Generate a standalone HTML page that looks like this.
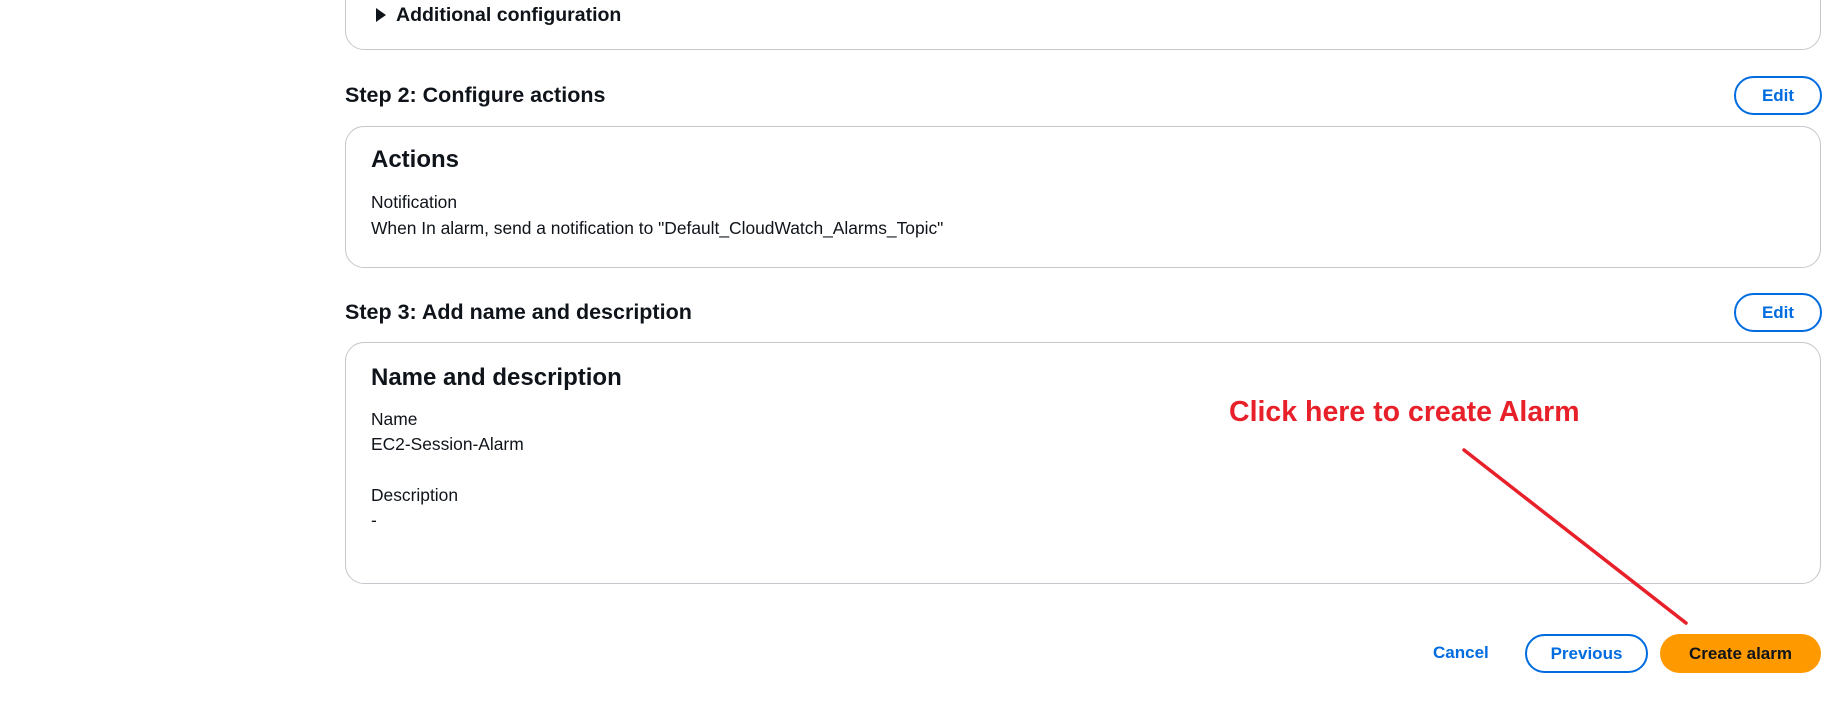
<!DOCTYPE html>
<html><head><style>
body{margin:0;width:1842px;height:706px;background:#fff;font-family:"Liberation Sans",sans-serif;color:#0f141a;position:relative;overflow:hidden}
.card{position:absolute;left:345px;width:1474px;border:1.5px solid #c6c6cd;border-radius:19px;background:#fff}
.h{position:absolute;left:345px;font-weight:bold;font-size:21.5px}
.t{position:absolute;font-size:17.4px}
.ct{position:absolute;font-size:24px;font-weight:bold}
.edit{position:absolute;left:1734px;width:84px;height:35px;border:2px solid #006ce0;border-radius:20px;color:#006ce0;font-weight:bold;font-size:17px;text-align:center;line-height:35px}
</style></head><body>
<div class="card" style="top:-30px;height:78px"></div>
<svg style="position:absolute;left:375px;top:7px" width="12" height="16"><polygon points="1,1 11,8 1,15" fill="#0f141a"/></svg>
<div style="position:absolute;left:396px;top:4px;font-weight:bold;font-size:19.5px">Additional configuration</div>
<div class="h" style="top:83px">Step 2: Configure actions</div>
<div class="edit" style="top:76px">Edit</div>
<div class="card" style="top:126px;height:140px"></div>
<div class="ct" style="left:371px;top:146px">Actions</div>
<div class="t" style="left:371px;top:192px">Notification</div>
<div class="t" style="left:371px;top:218px">When In alarm, send a notification to "Default_CloudWatch_Alarms_Topic"</div>
<div class="h" style="top:300px">Step 3: Add name and description</div>
<div class="edit" style="top:293px">Edit</div>
<div class="card" style="top:342px;height:240px"></div>
<div class="ct" style="left:371px;top:364px">Name and description</div>
<div class="t" style="left:371px;top:409px">Name</div>
<div class="t" style="left:371px;top:434px">EC2-Session-Alarm</div>
<div class="t" style="left:371px;top:485px">Description</div>
<div class="t" style="left:371px;top:510px">-</div>
<div style="position:absolute;left:1229px;top:396px;color:#e8202a;font-weight:bold;font-size:28.5px">Click here to create Alarm</div>
<svg style="position:absolute;left:0;top:0" width="1842" height="706"><line x1="1464" y1="450" x2="1686" y2="623" stroke="#e8202a" stroke-width="3.5" stroke-linecap="round"/></svg>
<div style="position:absolute;left:1433px;top:643px;color:#006ce0;font-weight:bold;font-size:17px">Cancel</div>
<div style="position:absolute;left:1525px;top:634px;width:119px;height:35px;border:2px solid #006ce0;border-radius:20px;color:#006ce0;font-weight:bold;font-size:17px;text-align:center;line-height:35px">Previous</div>
<div style="position:absolute;left:1660px;top:634px;width:161px;height:39px;background:#ff9900;border-radius:20px;color:#0f141a;font-weight:bold;font-size:17px;text-align:center;line-height:39px">Create alarm</div>
</body></html>
